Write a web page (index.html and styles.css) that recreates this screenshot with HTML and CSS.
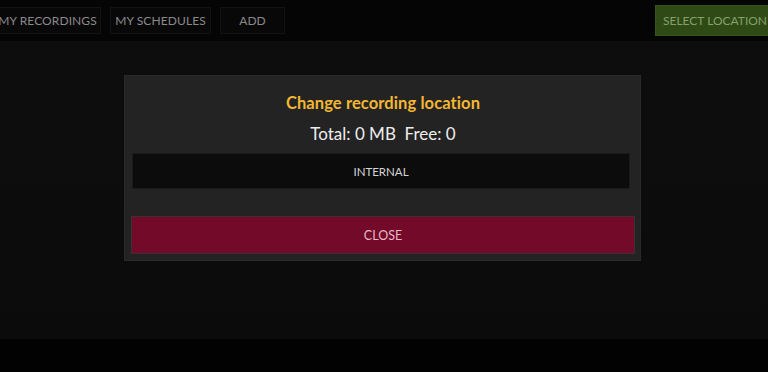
FILE: index.html
```html
<!DOCTYPE html>
<html>
<head>
<meta charset="utf-8">
<link rel="stylesheet" href="styles.css">
</head>
<body>
<div class="app">
  <header class="topbar">
    <nav class="tabs">
      <div class="tab tab-first">MY RECORDINGS</div>
      <div class="tab">MY SCHEDULES</div>
      <div class="tab tab-add">ADD</div>
    </nav>
    <div class="select-loc">SELECT LOCATION</div>
  </header>
  <main class="content">
    <div class="dialog">
      <div class="dlg-title">Change recording location</div>
      <div class="dlg-info">Total: 0 MB&nbsp; Free: 0</div>
      <div class="opt">INTERNAL</div>
      <div class="close-btn">CLOSE</div>
    </div>
  </main>
  <footer class="bottombar"></footer>
</div>
</body>
</html>
```

FILE: styles.css
```css
html, body {
  margin: 0;
  padding: 0;
  background: #020202;
  overflow: hidden;
}
.app {
  width: 768px;
  height: 372px;
  display: flex;
  flex-direction: column;
  font-family: "Lato", "Open Sans", sans-serif;
}
.topbar {
  height: 41px;
  flex: none;
  background: #050505;
  display: flex;
  align-items: flex-start;
  justify-content: space-between;
  overflow: hidden;
}
.tabs {
  display: flex;
  gap: 9px;
  margin-left: -6px;
  margin-top: 7px;
}
.tab {
  height: 27px;
  box-sizing: border-box;
  border: 1px solid #121212;
  background: #080808;
  color: #8a8a8a;
  font-size: 12px;
  letter-spacing: 0.1px;
  display: flex;
  align-items: center;
  justify-content: center;
  width: 101px;
}
.tab-first { width: 107px; }
.tab-add { width: 65px; }
.select-loc {
  margin-top: 5px;
  height: 31px;
  width: 120px;
  flex: none;
  box-sizing: border-box;
  background: #2f4a14;
  border: 1px solid #36531a;
  color: #84a06c;
  font-size: 12px;
  display: flex;
  align-items: center;
  padding-left: 7px;
  white-space: nowrap;
  margin-right: -7px;
}
.content {
  height: 298px;
  flex: none;
  background: linear-gradient(180deg, #0d0d0d 0%, #0b0b0b 100%);
  padding-top: 34px;
  box-sizing: border-box;
}
.dialog {
  margin-left: 124px;
  width: 517px;
  height: 186px;
  box-sizing: border-box;
  background: #232323;
  border: 1px solid #2a2a2a;
  padding: 17px 5px 6px 6px;
  display: flex;
  flex-direction: column;
}
.dlg-title {
  text-align: center;
  color: #f3b733;
  font-weight: 700;
  font-size: 16.5px;
  letter-spacing: 0.1px;
  line-height: 20px;
}
.dlg-info {
  text-align: center;
  color: #ededed;
  font-size: 17px;
  line-height: 24px;
  margin-top: 9px;
}
.opt {
  margin: 7px 5px 0 1px;
  height: 36px;
  box-sizing: border-box;
  background: #0c0c0c;
  border: 1px solid #1b1b1b;
  color: #d6d6d6;
  font-size: 11.5px;
  display: flex;
  align-items: center;
  justify-content: center;
}
.close-btn {
  margin: 27px 0 0 0;
  height: 38px;
  box-sizing: border-box;
  background: #740a29;
  border: 1px solid #3b3034;
  color: #e7b9c6;
  font-size: 12.5px;
  display: flex;
  align-items: center;
  justify-content: center;
}
.bottombar {
  flex: 1;
  background: #020202;
}
```
